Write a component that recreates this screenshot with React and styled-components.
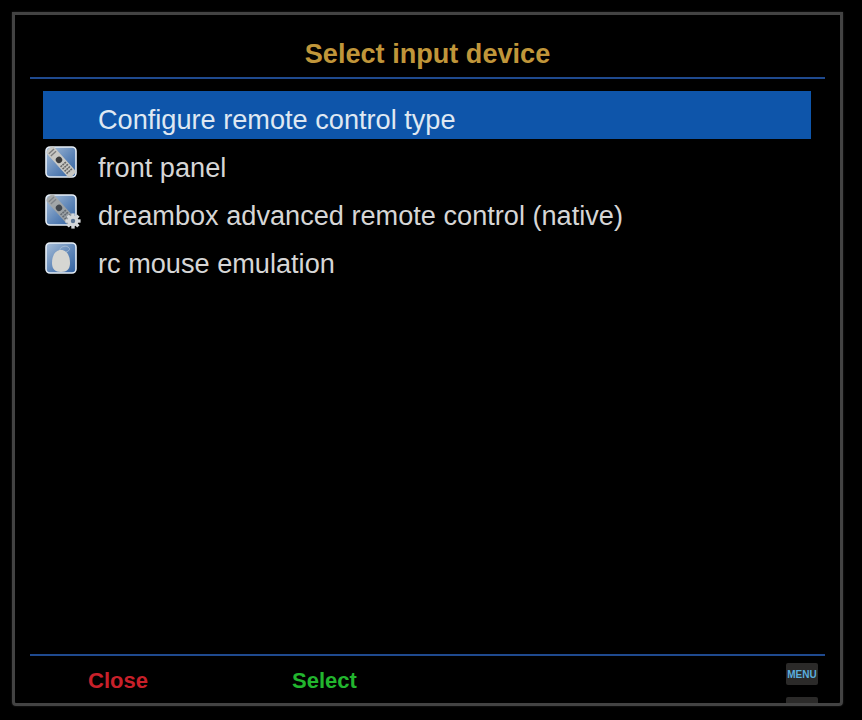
import React from "react";
import styled, { createGlobalStyle } from "styled-components";

const GlobalStyle = createGlobalStyle`
  html, body {
    margin: 0;
    padding: 0;
    background: #000;
  }
  body {
    font-family: "Liberation Sans", Arial, sans-serif;
  }
`;

const Page = styled.div`
  width: 862px;
  height: 720px;
  padding: 12px 19px 14px 12px;
  box-sizing: border-box;
  background: #000;
`;

const Frame = styled.div`
  width: 100%;
  height: 100%;
  box-sizing: border-box;
  border: 3px solid #434343;
  border-radius: 0 0 4px 4px;
  box-shadow: 0 0 2px #2a2a2a;
  padding: 0 15px;
  display: flex;
  flex-direction: column;
  overflow: hidden;
`;

const Title = styled.h1`
  margin: 0;
  height: 62px;
  padding-top: 16px;
  box-sizing: border-box;
  display: flex;
  align-items: center;
  justify-content: center;
  font-size: 27.1px;
  font-weight: 700;
  color: #c0963a;
`;

const Divider = styled.div`
  height: 2px;
  flex: none;
  background: #1f4a8f;
`;

const List = styled.ul`
  list-style: none;
  margin: 0;
  padding: 12px 14px 0 13px;
  flex: 1;
`;

const Row = styled.li`
  height: 48px;
  display: flex;
  align-items: center;
  background: ${(props) => (props.$selected ? "#0e55aa" : "transparent")};
  color: ${(props) => (props.$selected ? "#dfe8f2" : "#d6d6d6")};
  font-size: 27.15px;
`;

const IconSlot = styled.div`
  width: 55px;
  height: 48px;
  flex: none;
  padding: 7px 0 0 2px;
  box-sizing: border-box;
`;

const Label = styled.span`
  padding-top: 9px;
`;

const Footer = styled.div`
  height: 47px;
  flex: none;
  display: flex;
`;

const Action = styled.div`
  width: ${(props) => props.$width}px;
  margin-left: ${(props) => props.$offset || 0}px;
  padding-top: 12px;
  font-size: 22px;
  font-weight: 700;
  color: ${(props) => props.$color};
`;

const Keys = styled.div`
  margin-left: auto;
  margin-right: 7px;
  padding-top: 7px;
  display: flex;
  flex-direction: column;
  gap: 12px;
`;

const Key = styled.div`
  width: 32px;
  height: 22px;
  flex: none;
  background: #2b2a29;
  border-radius: 2px;
  color: #5aaede;
  font-size: 10px;
  font-weight: 700;
  display: flex;
  align-items: center;
  justify-content: center;
`;

const IconBase = ({ children }) => (
  <svg width="36" height="36" viewBox="0 0 36 36">
    <defs>
      <linearGradient id="tile" x1="0" y1="0" x2="1" y2="1">
        <stop offset="0" stopColor="#a9bfd8" />
        <stop offset="0.55" stopColor="#5f86b8" />
        <stop offset="1" stopColor="#2f5f9e" />
      </linearGradient>
    </defs>
    <rect x="1" y="1" width="30" height="30" rx="4" fill="url(#tile)" stroke="#e6eef6" strokeWidth="1.6" />
    {children}
  </svg>
);

const Remote = ({ dim }) => (
  <g transform="rotate(-42 16 16)" opacity={dim ? 0.85 : 1}>
    <rect x="11" y="-2" width="10" height="36" rx="3.5" fill={dim ? "#a8a8a4" : "#c8c8c4"} />
    <circle cx="16" cy="13" r="3.2" fill="#3a3a3a" />
    {[1, 4].map((y) => (
      <rect key={y} x="12.5" y={y} width="7" height="1.4" fill="#7d7d7d" />
    ))}
    {[18.5, 21.5, 24.5, 27.5].map((y) => (
      <g key={y}>
        <rect x="12.4" y={y} width="2" height="1.6" fill="#666" />
        <rect x="15" y={y} width="2" height="1.6" fill="#666" />
        <rect x="17.6" y={y} width="2" height="1.6" fill="#666" />
      </g>
    ))}
  </g>
);

const Gear = () => (
  <g transform="translate(28 27)">
    {[0, 45, 90, 135].map((angle) => (
      <rect key={angle} x="-1.7" y="-7.6" width="3.4" height="15.2" fill="#d4d7da" transform={`rotate(${angle})`} />
    ))}
    <circle r="5.4" fill="#d4d7da" />
    <circle r="2.2" fill="#5d7695" />
  </g>
);

const Mouse = () => (
  <>
    <path d="M15 9 C14 5 20 3 23 5 C26 7 24 9 21 10" fill="none" stroke="#b8c8da" strokeWidth="0.7" />
    <path d="M16 8 C22 8 25 14 25 21 C25 27 22 30 16 30 C10 30 7 27 7 21 C7 14 10 8 16 8 Z" fill="#d6d6d2" />
  </>
);

const items = [
  { label: "Configure remote control type", selected: true },
  { label: "front panel", icon: <IconBase><Remote /></IconBase> },
  { label: "dreambox advanced remote control (native)", icon: <IconBase><Remote dim /><Gear /></IconBase> },
  { label: "rc mouse emulation", icon: <IconBase><Mouse /></IconBase> },
];

const App = () => (
  <Page>
    <GlobalStyle />
    <Frame>
      <Title>Select input device</Title>
      <Divider />
      <List>
        {items.map((item) => (
          <Row key={item.label} $selected={item.selected}>
            <IconSlot>{item.icon}</IconSlot>
            <Label>{item.label}</Label>
          </Row>
        ))}
      </List>
      <Divider />
      <Footer>
        <Action $width={204} $offset={58} $color="#c8202a">Close</Action>
        <Action $width={100} $color="#22b52e">Select</Action>
        <Keys>
          <Key>MENU</Key>
          <Key />
        </Keys>
      </Footer>
    </Frame>
  </Page>
);

export default App;
